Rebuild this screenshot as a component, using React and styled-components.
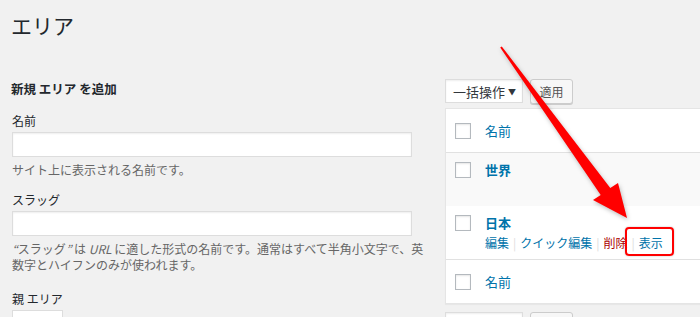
import React from "react";
import styled, { createGlobalStyle } from "styled-components";

const GlobalStyle = createGlobalStyle`
  html, body {
    margin: 0;
    padding: 0;
    background: #f1f1f1;
    overflow: hidden;
  }
  body {
    font-family: "Noto Sans CJK JP", "Noto Sans", sans-serif;
    font-size: 12px;
    color: #444;
  }
`

const Page = styled.div`
  position: relative;
  width: 700px;
  height: 317px;
  padding-left: 12px;
  box-sizing: border-box;
  overflow: hidden;
`

const Title = styled.h1`
  margin: 0 0 0 -1px;
  padding-top: 11px;
  font-size: 21px;
  line-height: 29px;
  font-weight: 400;
  color: #23282d;
`

const Columns = styled.div`
  display: flex;
  align-items: flex-start;
  margin-top: 39px;
  gap: 12px;
`

const FormColumn = styled.div`
  flex: 0 0 421px;
`

const FormHeading = styled.h2`
  margin: 0 0 13px -1px;
  font-size: 12.5px;
  line-height: 20px;
  font-weight: 700;
  color: #23282d;
`

const Field = styled.div`
  margin-bottom: ${props => props.$gap || 13}px;
`

const Label = styled.label`
  display: block;
  font-size: 12px;
  line-height: 18px;
  color: #23282d;
  margin-bottom: 2px;
`

const TextInput = styled.input`
  display: block;
  box-sizing: border-box;
  width: 400px;
  height: 25px;
  margin: 0;
  border: 1px solid #ddd;
  background: #fff;
  box-shadow: inset 0 1px 2px rgba(0, 0, 0, 0.07);
  outline: none;
`

const Description = styled.p`
  margin: 5px 0 0;
  font-size: 12px;
  line-height: 16px;
  color: #666;
  white-space: nowrap;

  em {
    font-style: italic;
  }
`

const ParentSelect = styled.div`
  width: 51px;
  height: 26px;
  box-sizing: border-box;
  border: 1px solid #ddd;
  background: #fff;
`

const ListColumn = styled.div`
  flex: 0 0 300px;
`

const TableNav = styled.div`
  display: flex;
  gap: 7px;
  height: 25px;
  margin-bottom: ${props => props.$bottom ? 0 : 4}px;
  margin-top: ${props => props.$bottom ? 8 : 0}px;
`

const BulkSelect = styled.div`
  display: flex;
  align-items: center;
  justify-content: space-between;
  box-sizing: border-box;
  width: 78px;
  height: 24px;
  padding: 0 6px 0 7px;
  border: 1px solid #ddd;
  background: #fff;
  box-shadow: inset 0 1px 2px rgba(0, 0, 0, 0.07);
  font-size: 13px;
  color: #32373c;

  span {
    font-size: 8px;
  }
`

const ApplyButton = styled.div`
  display: flex;
  align-items: center;
  justify-content: center;
  box-sizing: border-box;
  width: 43px;
  height: 25px;
  border: 1px solid #ccc;
  border-radius: 3px;
  background: #f7f7f7;
  box-shadow: 0 1px 0 #ccc;
  font-size: 12px;
  color: #555;
`

const Table = styled.div`
  width: 400px;
  border: 1px solid #e5e5e5;
  box-shadow: 0 1px 1px rgba(0, 0, 0, 0.04);
  background: #fff;
`

const Row = styled.div`
  display: flex;
  align-items: flex-start;
  gap: 14px;
  padding: ${props => props.$head ? "12px 0 11px 9px" : "7px 0 6px 9px"};
  background: ${props => props.$alt ? "#f9f9f9" : "#fff"};
  border-top: ${props => props.$foot ? "1px solid #e1e1e1" : "none"};
  border-bottom: ${props => props.$head && !props.$foot ? "1px solid #e1e1e1" : "none"};
`

const Checkbox = styled.span`
  flex: 0 0 auto;
  width: 16px;
  height: 16px;
  margin-top: 2px;
  box-sizing: border-box;
  border: 1px solid #b4b9be;
  background: #fff;
  box-shadow: inset 0 1px 2px rgba(0, 0, 0, 0.1);
`

const Cell = styled.div`
  display: flex;
  flex-direction: column;
`

const ColumnLink = styled.span`
  font-size: 13px;
  line-height: 20px;
  color: #0073aa;
`

const RowTitle = styled.strong`
  font-size: 13px;
  line-height: 20px;
  font-weight: 700;
  color: #0073aa;
`

const RowActions = styled.div`
  display: flex;
  align-items: center;
  font-size: 12px;
  line-height: 20px;
  visibility: ${props => props.$hidden ? "hidden" : "visible"};
`

const Action = styled.span`
  position: relative;
  color: ${props => props.$danger ? "#a00" : "#0073aa"};

  ${props => props.$marked && `
    &::after {
      content: "";
      position: absolute;
      left: -14px;
      right: -11px;
      top: -6px;
      bottom: -3px;
      border: 2px solid #f00;
      border-radius: 4px;
      box-shadow: 0 0 2px rgba(0, 0, 0, 0.25);
    }
  `}
`

const Sep = styled.span`
  color: #ddd;
  margin: 0 4px;
`

const Annotation = styled.svg`
  position: absolute;
  left: 0;
  top: 0;
  pointer-events: none;
  filter: drop-shadow(1px 2px 2px rgba(0, 0, 0, 0.25));
`

function TermRow({ name, alt, showActions }) {
  return (
    <Row $alt={alt}>
      <Checkbox />
      <Cell>
        <RowTitle>{name}</RowTitle>
        <RowActions $hidden={!showActions}>
          <Action>編集</Action>
          <Sep>|</Sep>
          <Action>クイック編集</Action>
          <Sep>|</Sep>
          <Action $danger>削除</Action>
          <Sep>|</Sep>
          <Action $marked>表示</Action>
        </RowActions>
      </Cell>
    </Row>
  );
}

export default function App() {
  return (
    <Page>
      <GlobalStyle />
      <Title>エリア</Title>
      <Columns>
        <FormColumn>
          <FormHeading>新規 エリア を追加</FormHeading>
          <Field>
            <Label>名前</Label>
            <TextInput type="text" />
            <Description>サイト上に表示される名前です。</Description>
          </Field>
          <Field $gap={17}>
            <Label>スラッグ</Label>
            <TextInput type="text" />
            <Description>
              <em>“</em>スラッグ<em>”</em> は <em>URL</em> に適した形式の名前です。通常はすべて半角小文字で、英
              <br />
              数字とハイフンのみが使われます。
            </Description>
          </Field>
          <Field>
            <Label>親 エリア</Label>
            <ParentSelect />
          </Field>
        </FormColumn>
        <ListColumn>
          <TableNav>
            <BulkSelect>一括操作<span>▼</span></BulkSelect>
            <ApplyButton>適用</ApplyButton>
          </TableNav>
          <Table>
            <Row $head>
              <Checkbox />
              <ColumnLink>名前</ColumnLink>
            </Row>
            <TermRow name="世界" alt />
            <TermRow name="日本" showActions />
            <Row $head $foot>
              <Checkbox />
              <ColumnLink>名前</ColumnLink>
            </Row>
          </Table>
          {/* bottom bulk actions: only their top edge shows in the frame */}
          <TableNav $bottom>
            <BulkSelect />
            <ApplyButton />
          </TableNav>
        </ListColumn>
      </Columns>
      <Annotation width="700" height="317" viewBox="0 0 700 317">
        <polygon
          points="500.2,47.6 501.8,46.4 610.3,187.9 618,183 627,218 593,200 600.7,195.1"
          fill="#f00"
        />
      </Annotation>
    </Page>
  );
}
